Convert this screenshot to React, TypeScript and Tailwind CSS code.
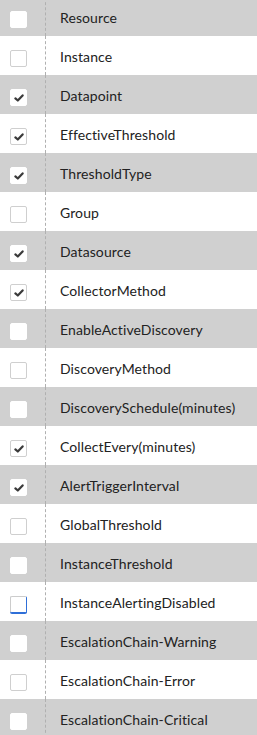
import React from "react";

const rows: { label: string; checked: boolean; focused?: boolean }[] = [
  { label: "Resource", checked: false },
  { label: "Instance", checked: false },
  { label: "Datapoint", checked: true },
  { label: "EffectiveThreshold", checked: true },
  { label: "ThresholdType", checked: true },
  { label: "Group", checked: false },
  { label: "Datasource", checked: true },
  { label: "CollectorMethod", checked: true },
  { label: "EnableActiveDiscovery", checked: false },
  { label: "DiscoveryMethod", checked: false },
  { label: "DiscoverySchedule(minutes)", checked: false },
  { label: "CollectEvery(minutes)", checked: true },
  { label: "AlertTriggerInterval", checked: true },
  { label: "GlobalThreshold", checked: false },
  { label: "InstanceThreshold", checked: false },
  { label: "InstanceAlertingDisabled", checked: false, focused: true },
  { label: "EscalationChain-Warning", checked: false },
  { label: "EscalationChain-Error", checked: false },
  { label: "EscalationChain-Critical", checked: false },
];

function Check() {
  return (
    <svg width="10" height="8" viewBox="0 0 10 8">
      <path d="M1.4 4.4 L3.8 6.5 L8.6 1.4" fill="none" stroke="#3a3a3a" strokeWidth="2.2" strokeLinecap="round" strokeLinejoin="round" />
    </svg>
  );
}

export default function App() {
  return (
    <div className="w-[257px] h-[735px] overflow-hidden bg-white flow-root" style={{ fontFamily: "Lato, 'Open Sans', sans-serif" }}>
      <div className="-mt-[3px]">
        {rows.map((r, i) => {
          const gray = i % 2 === 0;
          let box = "w-[17px] h-[17px] rounded-[2px] bg-white flex items-center justify-center border ";
          if (r.focused) box += "border-[#cccccc] border-r-[#2f6fd8] border-b-[#2f6fd8] shadow-[0_1px_0_#2f6fd8]";
          else if (gray) box += "border-white";
          else box += "border-[#cfcfcf]";
          return (
            <div key={r.label} className={`flex h-[39px] ${gray ? "bg-[#d0d0d0]" : "bg-white"}`}>
              <div className="w-[46px] shrink-0 border-r border-dashed border-[#b0b0b0] pl-[10px] pt-[14px]">
                <div className={box}>{r.checked && <Check />}</div>
              </div>
              <div className="flex items-center pl-[14px] pt-[2px] text-[14px] tracking-[0.1px] text-[#222222]">{r.label}</div>
            </div>
          );
        })}
      </div>
    </div>
  );
}
